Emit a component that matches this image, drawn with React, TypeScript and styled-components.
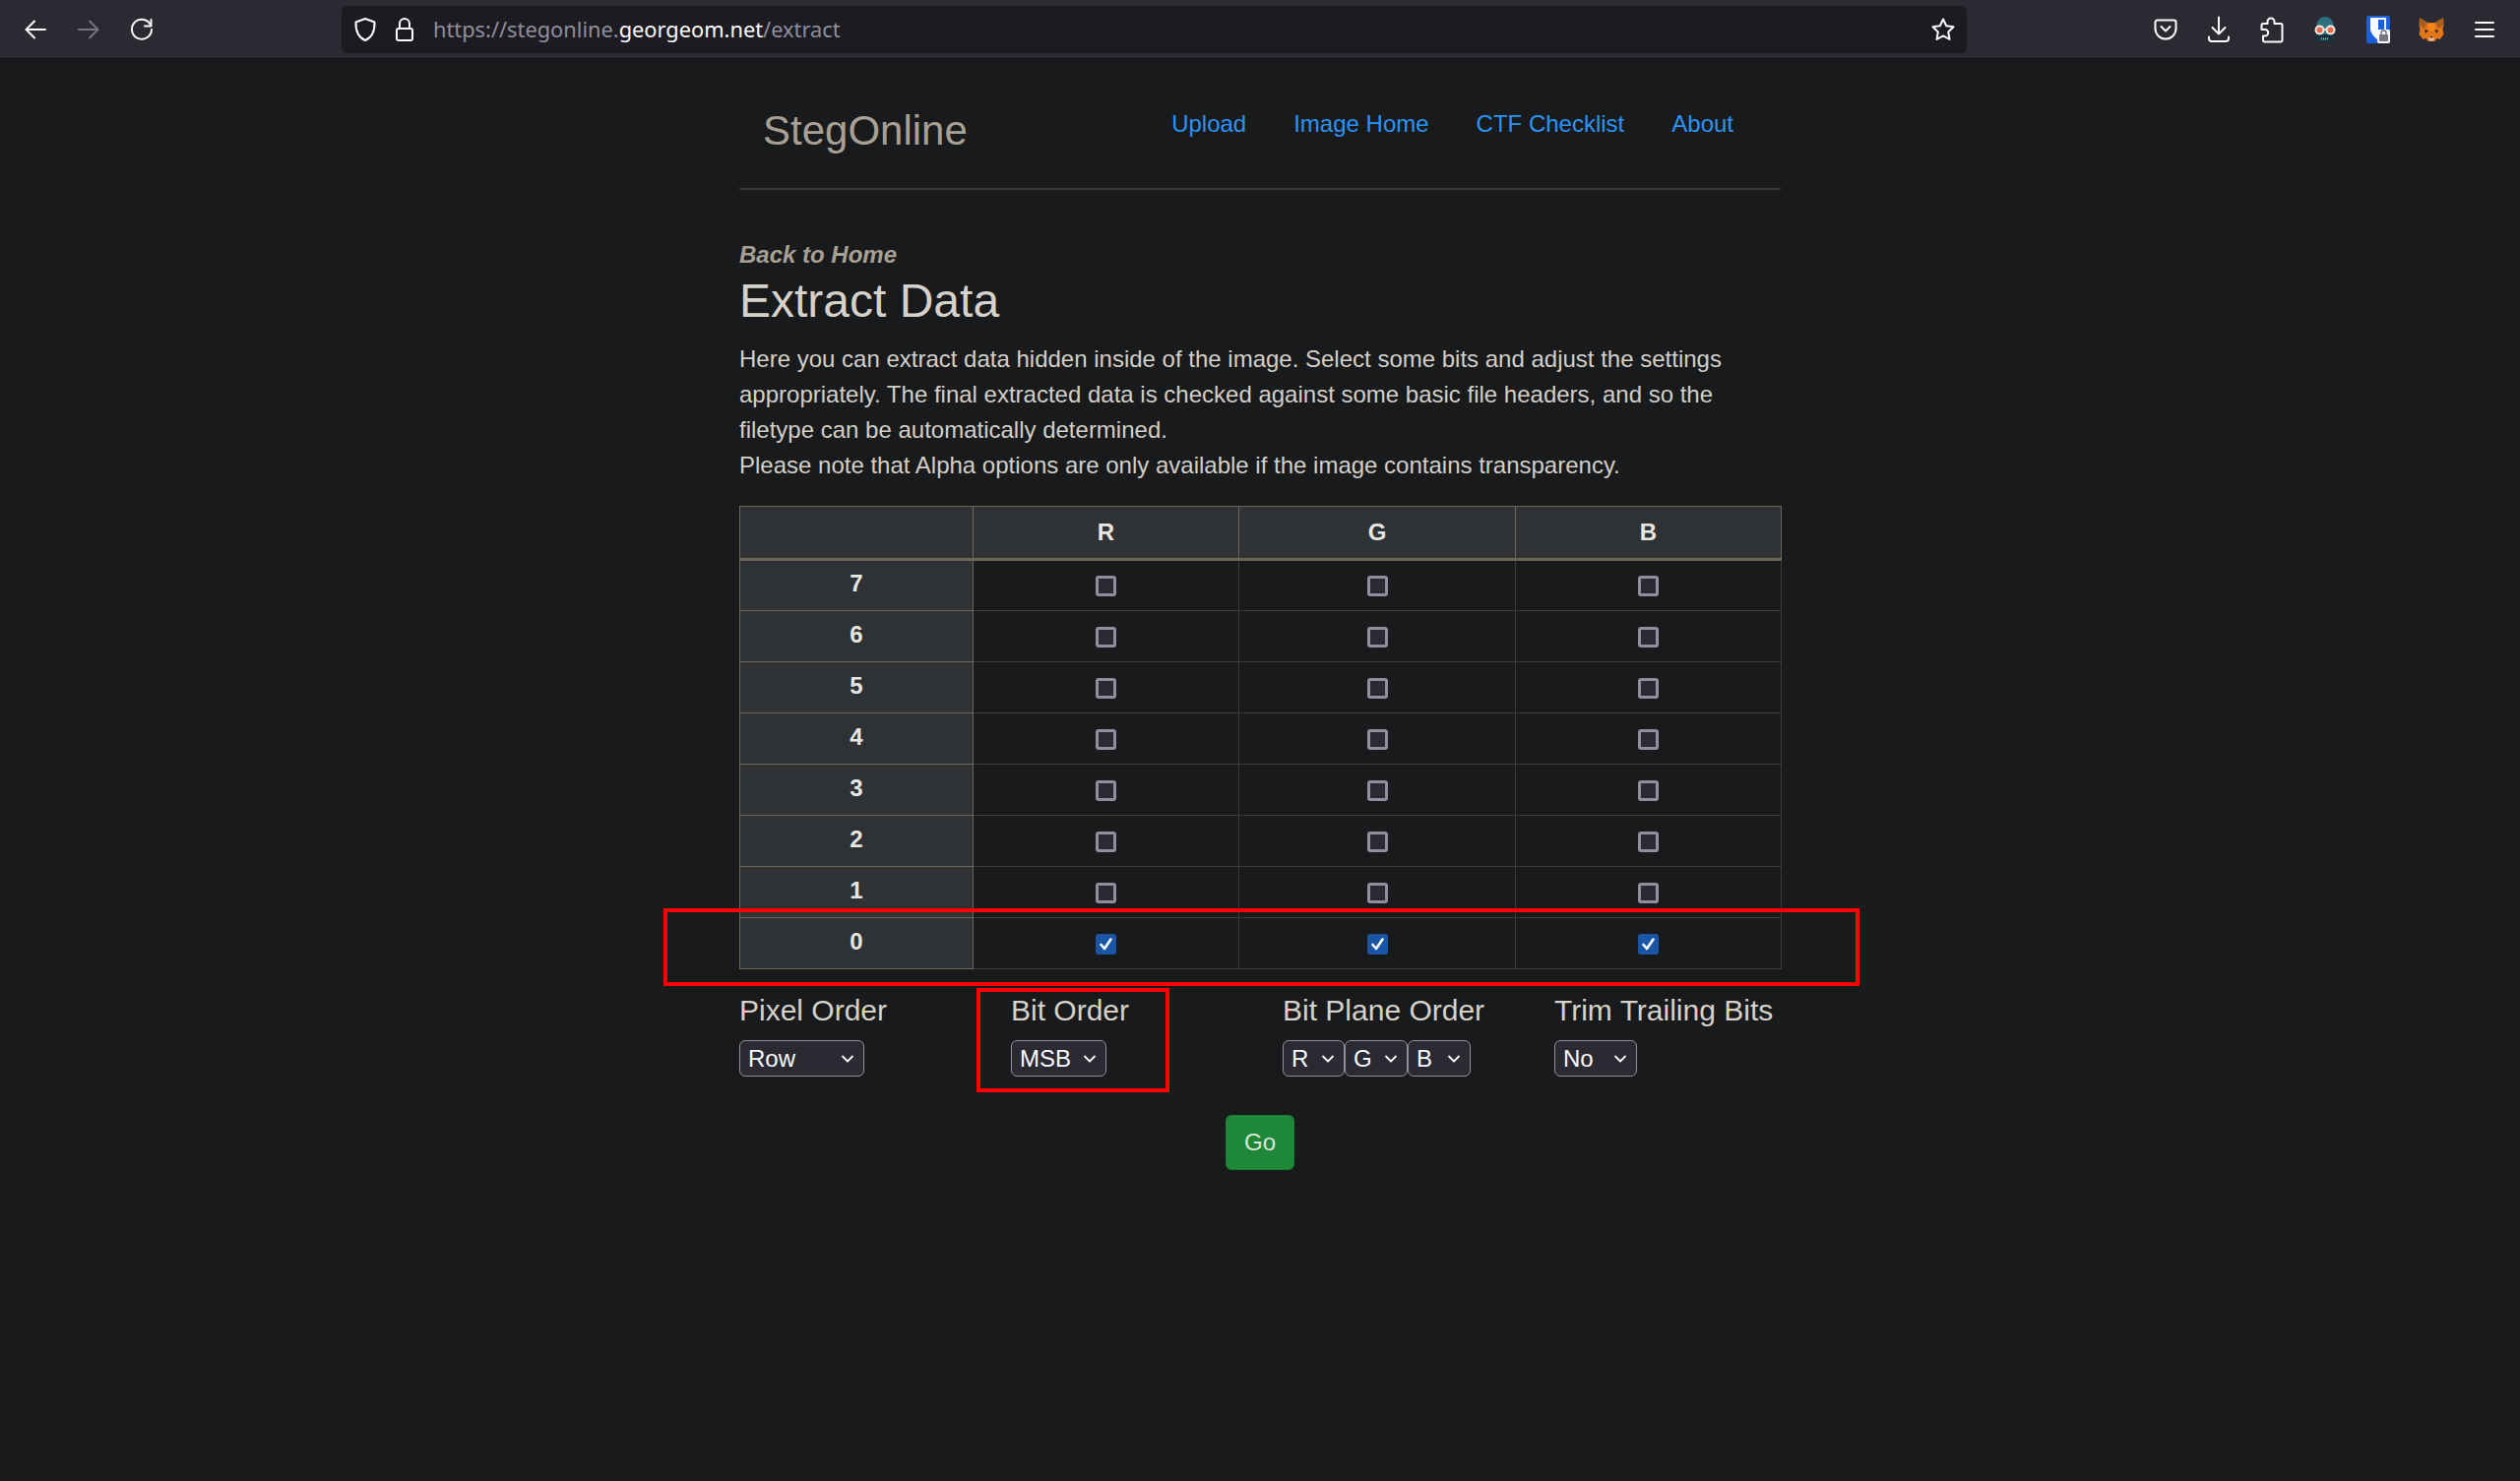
import styled, { createGlobalStyle } from 'styled-components';

const GlobalStyle = createGlobalStyle`
  html, body {
    margin: 0;
    padding: 0;
    background: #181a1b;
  }
  body {
    font-family: "Liberation Sans", Arial, sans-serif;
    font-size: 24px;
    line-height: 36px;
    color: #d3cfc9;
  }
`;

const bits = [7, 6, 5, 4, 3, 2, 1, 0];
const channels = ['R', 'G', 'B'];
const colWidths = [237, 270, 281, 270];

const chevron = `url("data:image/svg+xml,%3Csvg xmlns='http://www.w3.org/2000/svg' width='14' height='10' viewBox='0 0 14 10'%3E%3Cpath d='M2 2.5l5 5 5-5' fill='none' stroke='%23fbfbfe' stroke-width='1.8' stroke-linecap='round' stroke-linejoin='round'/%3E%3C/svg%3E")`;

function App() {
  return (
    <>
      <GlobalStyle />
      <Toolbar>
        <NavGroup>
          <ToolButton>
            <svg width="26" height="26" viewBox="0 0 26 26" fill="none" stroke="#fbfbfe" strokeWidth="2" strokeLinecap="round" strokeLinejoin="round">
              <path d="M23 13H4M12 4.500L3.500 13l8.500 8.500" />
            </svg>
          </ToolButton>
          <ToolButton>
            <svg width="26" height="26" viewBox="0 0 26 26" fill="none" stroke="#75757f" strokeWidth="2" strokeLinecap="round" strokeLinejoin="round">
              <path d="M3 13h19M14 4.500l8.500 8.500-8.500 8.500" />
            </svg>
          </ToolButton>
          <ToolButton>
            <svg width="26" height="26" viewBox="0 0 26 26" fill="none" stroke="#fbfbfe" strokeWidth="2" strokeLinecap="round" strokeLinejoin="round">
              <path d="M21.500 7.500A10 10 0 1 0 23 13" />
              <path d="M22.500 3v6.500H16" />
            </svg>
          </ToolButton>
        </NavGroup>
        <UrlBar>
          <ShieldIcon>
            <svg width="24" height="26" viewBox="0 0 24 26" fill="none" stroke="#fbfbfe" strokeWidth="2" strokeLinejoin="round">
              <path d="M12 2l9.500 3.500c.3 8.500-2.500 15.500-9.500 18.500C5 21 2.200 14 2.500 5.500z" />
            </svg>
          </ShieldIcon>
          <LockIcon>
            <svg width="20" height="26" viewBox="0 0 20 26" fill="none" stroke="#fbfbfe" strokeWidth="2" strokeLinejoin="round">
              <path d="M5 12V7a5 5 0 0 1 10 0v5" />
              <rect x="2" y="12" width="16" height="12" rx="2" />
            </svg>
          </LockIcon>
          <UrlText>
            https://stegonline.<UrlDomain>georgeom.net</UrlDomain>/extract
          </UrlText>
          <StarIcon>
            <svg width="26" height="26" viewBox="0 0 26 26" fill="none" stroke="#fbfbfe" strokeWidth="2" strokeLinejoin="round">
              <path d="M13 2.500l3.200 6.800 7.300 1-5.300 5.200 1.300 7.500-6.500-3.600-6.500 3.600 1.300-7.500L2.500 10.300l7.300-1z" />
            </svg>
          </StarIcon>
        </UrlBar>
        <ExtGroup>
          <ToolButton>
            <svg width="24" height="24" viewBox="0 0 24 24" fill="none" stroke="#fbfbfe" strokeWidth="2" strokeLinecap="round" strokeLinejoin="round">
              <path d="M3.500 2.500h17a2 2 0 0 1 2 2V11a10.500 10.500 0 0 1-21 0V4.500a2 2 0 0 1 2-2z" />
              <path d="M7.500 9l4.500 4.500L16.500 9" />
            </svg>
          </ToolButton>
          <ToolButton>
            <svg width="26" height="28" viewBox="0 0 26 28" fill="none" stroke="#fbfbfe" strokeWidth="2" strokeLinecap="round" strokeLinejoin="round">
              <path d="M13 1.500v17M6.500 12l6.500 6.500 6.500-6.500" />
              <path d="M3 21.500v1.500a3 3 0 0 0 3 3h14a3 3 0 0 0 3-3v-1.500" />
            </svg>
          </ToolButton>
          <ToolButton>
            <svg width="26" height="28" viewBox="0 0 26 28" fill="none" stroke="#fbfbfe" strokeWidth="2" strokeLinejoin="round">
              <path d="M12 2.500a3.500 3.500 0 0 1 3.500 3.500v2H22a1.500 1.500 0 0 1 1.500 1.500V25a1.500 1.500 0 0 1-1.500 1.500H5.500A1.500 1.500 0 0 1 4 25v-4.500h2a3.200 3.200 0 0 0 0-6.400H2.500V9.500A1.500 1.500 0 0 1 4 8h4.500V6A3.500 3.500 0 0 1 12 2.500z" />
            </svg>
          </ToolButton>
          <ToolButton>
            <svg width="26" height="28" viewBox="0 0 26 28">
              <path d="M4 12C4 5 8 1 13 1s9 4 9 11v15H4z" fill="#2f6f7e" />
              <rect x="4" y="19" width="18" height="8" fill="#16323b" />
              <circle cx="7.500" cy="14.500" r="4" fill="#e8694a" stroke="#f3ece6" strokeWidth="2" />
              <circle cx="18.500" cy="14.500" r="4" fill="#e8694a" stroke="#f3ece6" strokeWidth="2" />
              <path d="M11.500 14h3" stroke="#f3ece6" strokeWidth="1.500" />
              <path d="M9 23.500h8" stroke="#8fc6cf" strokeWidth="2" strokeDasharray="1 1" />
            </svg>
          </ToolButton>
          <ToolButton>
            <svg width="24" height="30" viewBox="0 0 24 30">
              <rect width="24" height="28" y="1" rx="2" fill="#1b5fd9" />
              <path d="M4 3h16v11c0 4-3 8-8 12C7 22 4 18 4 14z" fill="#f4f7fd" />
              <path d="M12 5h6v9c0 2-1 5-6 9z" fill="#1b5fd9" />
              <rect x="11" y="15" width="13" height="14" rx="2" fill="#f4f7fd" />
              <rect x="13" y="20" width="9" height="7" rx="1" fill="#77777f" />
              <path d="M15 20v-1.500a2.500 2.500 0 0 1 5 0V20" fill="none" stroke="#77777f" strokeWidth="1.500" />
            </svg>
          </ToolButton>
          <ToolButton>
            <svg width="26" height="26" viewBox="0 0 26 26">
              <path d="M1 1l8 5h8l8-5 .5 8-1 3 1 6-4 5-3-1-2 3h-7l-2-3-3 1-4-5 1-6-1-3z" fill="#e2761b" />
              <path d="M1 1l8 5-3 6-5-3zM25 1l-8 5 3 6 5-3z" fill="#a8601f" />
              <path d="M6 13l4 1-3 3zM20 13l-4 1 3 3z" fill="#3d2b20" />
              <path d="M10 21l3 1 3-1-1 3.500h-4z" fill="#d7c1b3" />
              <path d="M11.500 20h3L13 21.500z" fill="#2b1d14" />
              <path d="M9 7h8l-2 8h-4z" fill="#f6851b" />
            </svg>
          </ToolButton>
          <ToolButton>
            <svg width="24" height="20" viewBox="0 0 24 20" stroke="#fbfbfe" strokeWidth="2" strokeLinecap="round">
              <path d="M3 3h18M3 10h18M3 17h18" />
            </svg>
          </ToolButton>
        </ExtGroup>
      </Toolbar>

      <Container>
        <SiteHeader>
          <Brand>StegOnline</Brand>
          <NavLinks>
            <NavLink href="#">Upload</NavLink>
            <NavLink href="#">Image Home</NavLink>
            <NavLink href="#">CTF Checklist</NavLink>
            <NavLink href="#">About</NavLink>
          </NavLinks>
        </SiteHeader>

        <BackLink href="#">Back to Home</BackLink>
        <Title>Extract Data</Title>
        <Intro>
          Here you can extract data hidden inside of the image. Select some bits and adjust the settings
          appropriately. The final extracted data is checked against some basic file headers, and so the
          filetype can be automatically determined.
          <br />
          Please note that Alpha options are only available if the image contains transparency.
        </Intro>

        <TableWrap>
          <BitTable>
            <colgroup>
              {colWidths.map((w, i) => (
                <col key={i} style={{ width: w }} />
              ))}
            </colgroup>
            <thead>
              <tr>
                <HeadCell />
                {channels.map(c => (
                  <HeadCell key={c}>{c}</HeadCell>
                ))}
              </tr>
            </thead>
            <tbody>
              {bits.map(bit => (
                <tr key={bit}>
                  <RowHead>{bit}</RowHead>
                  {channels.map(c => (
                    <BitCell key={c}>
                      <Check $checked={bit === 0}>
                        {bit === 0 && (
                          <svg width="15" height="15" viewBox="0 0 15 15" fill="none" stroke="#fff" strokeWidth="2.600" strokeLinecap="round" strokeLinejoin="round">
                            <path d="M2.500 8l3.500 4 6.500-9.500" />
                          </svg>
                        )}
                      </Check>
                    </BitCell>
                  ))}
                </tr>
              ))}
            </tbody>
          </BitTable>
          <RowHighlight />
        </TableWrap>

        <Options>
          <Option>
            <OptionLabel>Pixel Order</OptionLabel>
            <Select $width={127} defaultValue="Row">
              <option>Row</option>
              <option>Column</option>
            </Select>
          </Option>
          <Option>
            <OptionLabel>Bit Order</OptionLabel>
            <Select $width={97} defaultValue="MSB">
              <option>MSB</option>
              <option>LSB</option>
            </Select>
            <OptionHighlight />
          </Option>
          <Option>
            <OptionLabel>Bit Plane Order</OptionLabel>
            <SelectRow>
              <Select $width={63} defaultValue="R">
                <option>R</option>
                <option>G</option>
                <option>B</option>
              </Select>
              <Select $width={64} defaultValue="G">
                <option>R</option>
                <option>G</option>
                <option>B</option>
              </Select>
              <Select $width={64} defaultValue="B">
                <option>R</option>
                <option>G</option>
                <option>B</option>
              </Select>
            </SelectRow>
          </Option>
          <Option>
            <OptionLabel>Trim Trailing Bits</OptionLabel>
            <Select $width={84} defaultValue="No">
              <option>No</option>
              <option>Yes</option>
            </Select>
          </Option>
        </Options>

        <GoRow>
          <GoButton>Go</GoButton>
        </GoRow>
      </Container>
    </>
  );
}

export default App;

const Toolbar = styled.header`
  display: flex;
  align-items: center;
  height: 59px;
  padding: 0 9px;
  background: #2b2a33;
  border-bottom: 1px solid #0c0c0d;
`;

const NavGroup = styled.div`
  display: flex;
`;

const ExtGroup = styled.div`
  display: flex;
  margin-left: auto;
`;

const ToolButton = styled.div`
  display: flex;
  align-items: center;
  justify-content: center;
  width: 54px;
  height: 48px;
`;

const UrlBar = styled.div`
  display: flex;
  align-items: center;
  width: 1651px;
  height: 48px;
  margin-left: 176px;
  padding: 0 9px 0 4px;
  box-sizing: border-box;
  background: #1c1b22;
  border-radius: 6px;
`;

const ShieldIcon = styled.span`
  display: flex;
  justify-content: center;
  width: 40px;
  margin-right: 5px;
`;

const LockIcon = styled.span`
  display: flex;
  justify-content: center;
  width: 30px;
  margin-right: 14px;
`;

const UrlText = styled.span`
  font-family: "Noto Sans", sans-serif;
  font-size: 21.800px;
  color: #8f8f9d;
  white-space: nowrap;
`;

const UrlDomain = styled.span`
  color: #fbfbfe;
`;

const StarIcon = styled.span`
  display: flex;
  margin-left: auto;
  margin-right: 2px;
`;

const Container = styled.main`
  width: 1058px;
  margin: 0 auto;
`;

const SiteHeader = styled.div`
  display: flex;
  justify-content: space-between;
  height: 133px;
  padding: 0 24px;
  box-sizing: border-box;
  border-bottom: 2px solid #363a3c;
`;

const Brand = styled.div`
  margin-top: 46px;
  font-size: 42px;
  line-height: 54px;
  color: #a8a095;
`;

const NavLinks = styled.nav`
  display: flex;
  gap: 48px;
  padding: 48px 24px 0 0;
`;

const NavLink = styled.a`
  color: #2b95f5;
  text-decoration: none;
`;

const BackLink = styled.a`
  display: block;
  margin-top: 48px;
  font-weight: bold;
  font-style: italic;
  color: #a8a095;
  text-decoration: none;
`;

const Title = styled.h1`
  margin: 0 0 12px;
  font-size: 48px;
  font-weight: 400;
  line-height: 58px;
  color: #d6d2cb;
`;

const Intro = styled.p`
  margin: 0 0 23px;
`;

const TableWrap = styled.div`
  position: relative;
`;

const BitTable = styled.table`
  width: 100%;
  table-layout: fixed;
  border-collapse: collapse;
`;

const HeadCell = styled.th`
  height: 52px;
  padding: 0;
  text-align: center;
  font-weight: bold;
  color: #e8e6e3;
  background: #2e3234;
  border: 1px solid #6e6757;
  border-bottom-width: 3px;
`;

const RowHead = styled.th`
  height: 52px;
  padding: 0 0 4px;
  box-sizing: border-box;
  text-align: center;
  font-weight: bold;
  color: #e8e6e3;
  background: #2e3234;
  border: 1px solid #6e6757;
`;

const BitCell = styled.td`
  height: 52px;
  padding: 0;
  box-sizing: border-box;
  text-align: center;
  border: 1px solid #383c3e;
`;

const Check = styled.span<{ $checked: boolean }>`
  display: inline-flex;
  align-items: center;
  justify-content: center;
  width: 21px;
  height: 21px;
  margin-bottom: 2px;
  box-sizing: border-box;
  vertical-align: middle;
  border-radius: 3px;
  border: ${p => (p.$checked ? '0' : '3px solid #8f8f9d')};
  background: ${p => (p.$checked ? '#1a56a5' : '#2b2a33')};
`;

const RowHighlight = styled.div`
  position: absolute;
  left: -77px;
  top: 409px;
  width: 1215px;
  height: 79px;
  box-sizing: border-box;
  border: 4px solid #ff0000;
`;

const Options = styled.div`
  display: grid;
  grid-template-columns: repeat(4, 276px);
  margin-top: 24px;
`;

const Option = styled.div`
  position: relative;
`;

const OptionHighlight = styled.div`
  position: absolute;
  left: -35px;
  top: -5px;
  width: 196px;
  height: 106px;
  box-sizing: border-box;
  border: 4px solid #ff0000;
`;

const OptionLabel = styled.div`
  margin-bottom: 12px;
  font-size: 30px;
  line-height: 36px;
  color: #d6d2cb;
`;

const SelectRow = styled.div`
  display: flex;
`;

const Select = styled.select<{ $width: number }>`
  display: block;
  width: ${p => p.$width}px;
  height: 37px;
  padding: 0 0 0 8px;
  box-sizing: border-box;
  appearance: none;
  font-family: "Liberation Sans", Arial, sans-serif;
  font-size: 24px;
  color: #fbfbfe;
  background: #2b2a33 ${chevron} no-repeat right 9px center;
  border: 1px solid #8f8f9d;
  border-radius: 6px;
`;

const GoRow = styled.div`
  display: flex;
  justify-content: center;
  margin-top: 39px;
`;

const GoButton = styled.button`
  width: 70px;
  height: 56px;
  padding: 0;
  font-family: "Liberation Sans", Arial, sans-serif;
  font-size: 24px;
  color: #d8e8da;
  background: #1e8738;
  border: 1px solid #1e7d35;
  border-radius: 6px;
`;
